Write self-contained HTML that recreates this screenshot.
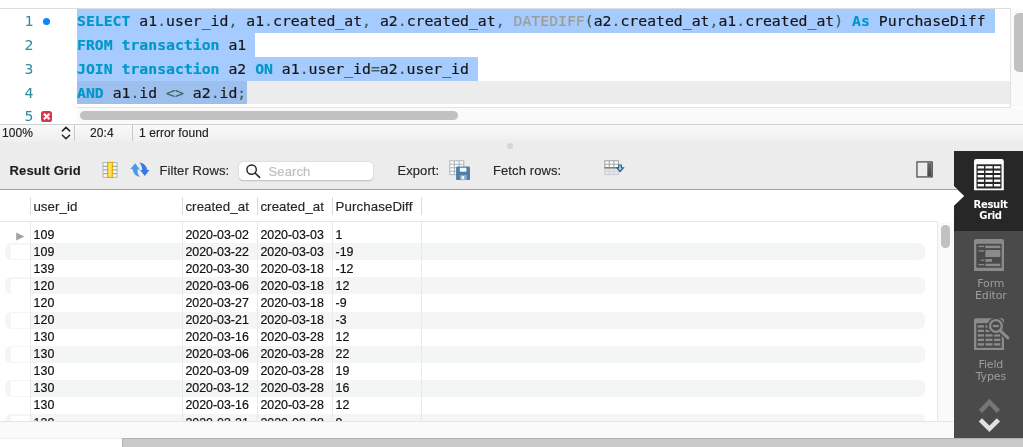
<!DOCTYPE html>
<html><head><meta charset="utf-8"><title>Result Grid</title>
<style>
*{box-sizing:border-box;margin:0;padding:0}
html,body{width:1023px;height:447px;overflow:hidden;background:#fff}
body{position:relative;font-family:"Liberation Sans",Arial,sans-serif;color:#1f1f1f}
.abs{position:absolute}
/* editor */
#ed-top{left:0;top:8px;width:1011px;height:1px;background:#dddddd}
#ed-right{left:1010px;top:8px;width:1px;height:100px;background:#e2e2e2}
#ed-vtrack{left:1011px;top:9px;width:12px;height:98px;background:#fafafa}
#ed-vthumb{left:1014px;top:12.5px;width:14px;height:59.5px;border-radius:5px;background:#c1c1c1}
#curline{left:77px;top:80.6px;width:933px;height:23.8px;background:#ececec}
.sel{position:absolute;left:77.3px;height:23.9px;background:#a6cbfe}
.ln{position:absolute;left:0;width:33.4px;text-align:right;font-family:"DejaVu Sans Mono","Liberation Mono",monospace;font-size:14px;line-height:23.8px;height:23.8px;color:#2d8ba3;transform:scaleX(1.054);transform-origin:right center}
.code{position:absolute;left:77.1px;white-space:pre;font-family:"DejaVu Sans Mono","Liberation Mono",monospace;font-size:14px;line-height:23.8px;height:23.8px;color:#161616;transform:scaleX(1.0566);transform-origin:left center;-webkit-text-stroke:0.18px}
.k{color:#0097c9;font-weight:bold}
.f{color:#9d9d95}
.o{color:#3d5f52}
#dot{left:42.9px;top:17.6px;width:7px;height:7px;border-radius:50%;background:#0a84ff}
#err{left:41px;top:110.8px;width:11.4px;height:11px;border-radius:2.6px;background:#d9364e}
#hline{left:77px;top:106.6px;width:934px;height:1px;background:#e4e4e4}
#htrack{left:77px;top:107.6px;width:946px;height:16px;background:#fafafa}
#hthumb{left:79.5px;top:111px;width:378px;height:9.4px;border-radius:5px;background:#c1c1c1}
/* status bar */
#status{left:0;top:123.6px;width:1023px;height:19px;background:linear-gradient(#f9f9f9,#eeeeee);border-top:1px solid #d2d2d2}
#status span{position:absolute;top:-0.8px;font-size:12px;line-height:19px;color:#222;letter-spacing:0.08px;-webkit-text-stroke:0.15px #222}
.vsep{position:absolute;top:124px;width:1px;height:17px;background:#c9c9c9}
/* lower pane */
#pane{left:0;top:142px;width:1023px;height:305px;background:#ececec}
#splitdot{left:506.5px;top:143px;width:6px;height:6px;border-radius:50%;background:#d6d6d6}
.tb{position:absolute;top:162px;height:18px;line-height:18px;font-size:13px;color:#262626;white-space:nowrap;letter-spacing:0.1px;-webkit-text-stroke:0.15px #262626}
#search{left:239px;top:162px;width:134px;height:18px;border-radius:4.5px;background:#fff;box-shadow:0 0 0 0.5px #dedede,0 0.6px 1.2px rgba(0,0,0,.28)}
#tbline{left:0;top:189px;width:954px;height:1px;background:#a2a2a2}
#grid{left:0;top:190px;width:954px;height:231px;background:#fff;overflow:hidden}
#below{left:0;top:421px;width:954px;height:17px;background:#fafafa;border-top:1px solid #e6e6e6}
#bot-l{left:0;top:437.6px;width:122px;height:10px;background:#fff;border-top:1px solid #efefef}
#bot-r{left:121.6px;top:437.8px;width:902px;height:10px;background:#c9c9c9;border-top:1px solid #b2b2b2;border-left:1px solid #b2b2b2}
.hd{position:absolute;top:8px;height:17px;line-height:17px;font-size:13.3px;color:#262626;white-space:nowrap;letter-spacing:0.08px;-webkit-text-stroke:0.15px #262626}
.hsep{position:absolute;top:7px;width:1px;height:17.5px;background:#dcdcdc}
#hdline{left:0;top:31px;width:938px;height:1px;background:#e6e6e6}
#gright{left:937px;top:31.6px;width:17px;height:200px;background:#fafafa;border-left:1px solid #e8e8e8}
.csep{position:absolute;top:32px;width:1px;height:200px;background:#e9e9e9}
.stripe{position:absolute;left:5px;width:920px;height:17.08px;border-radius:6px;background:#f4f5f5}
.rh{position:absolute;left:11.4px;width:18.8px;height:14.6px;margin-top:1.5px;background:#fff}
.row{-webkit-text-stroke:0.2px #111;position:absolute;left:0;width:938px;height:17px;line-height:17px;font-size:12.4px;color:#111;white-space:nowrap}
.row span{position:absolute;top:0}
.c1{left:33.6px}.c2{left:185.4px}.c3{left:260.4px}.c4{left:335.6px}
#gthumb{left:941px;top:34.9px;width:8.8px;height:23.4px;border-radius:4.2px;background:#c1c1c1}
/* sidebar */
#side{left:953.7px;top:151.2px;width:70px;height:286.4px;background:#4a4a4a}
#side-act{left:953.7px;top:151.2px;width:70px;height:79.4px;background:#272727}
.sl{position:absolute;left:955.9px;width:70px;text-align:center;font-family:"DejaVu Sans","Liberation Sans",sans-serif;font-size:11px;line-height:12.1px;color:#9d9d9d;letter-spacing:-0.15px}
.sl.act{font-family:"DejaVu Sans Condensed","DejaVu Sans","Liberation Sans",sans-serif;font-stretch:condensed;font-weight:bold;color:#fff;font-size:11.2px;line-height:11.4px;letter-spacing:-0.35px;left:955.5px}
</style></head>
<body>
<div id="root" style="position:absolute;left:0;top:0;width:1023px;height:447px;will-change:transform">
<!-- editor -->
<div class="abs" id="curline"></div>
<div class="sel" style="top:8.9px;width:917.6px"></div>
<div class="sel" style="top:32.7px;width:178px"></div>
<div class="sel" style="top:56.6px;width:400.8px;height:24.3px"></div>
<div class="sel" style="top:80.6px;width:169.5px;height:23.8px;background:#9cbfee"></div>
<div class="abs" id="ed-top"></div>
<div class="abs" id="ed-right"></div>
<div class="abs" id="ed-vtrack"></div>
<div class="abs" id="ed-vthumb"></div>
<div class="ln" style="top:10.2px">1</div>
<div class="ln" style="top:34px">2</div>
<div class="ln" style="top:57.8px">3</div>
<div class="ln" style="top:81.6px">4</div>
<div class="ln" style="top:105.4px">5</div>
<div class="abs" id="dot"></div>
<div class="code" style="top:10.2px"><span class="k">SELECT</span> a1<span class="o">.</span>user_id<span class="o">,</span> a1<span class="o">.</span>created_at<span class="o">,</span> a2<span class="o">.</span>created_at<span class="o">,</span> <span class="f">DATEDIFF</span><span class="o">(</span>a2<span class="o">.</span>created_at<span class="o">,</span>a1<span class="o">.</span>created_at<span class="o">)</span> <span class="k">As</span> PurchaseDiff</div>
<div class="code" style="top:34px"><span class="k">FROM</span> <span class="k">transaction</span> a1</div>
<div class="code" style="top:57.8px"><span class="k">JOIN</span> <span class="k">transaction</span> a2 <span class="k">ON</span> a1<span class="o">.</span>user_id<span class="o">=</span>a2<span class="o">.</span>user_id</div>
<div class="code" style="top:81.6px"><span class="k">AND</span> a1<span class="o">.</span>id <span class="o">&lt;&gt;</span> a2<span class="o">.</span>id<span class="o">;</span></div>
<div class="abs" id="hline"></div>
<div class="abs" id="htrack"></div>
<div class="abs" id="hthumb"></div>
<div class="abs" id="err"><svg width="11.4" height="11" viewBox="0 0 11.4 11" style="display:block"><path d="M2.9 2.7 L8.5 8.3 M8.5 2.7 L2.9 8.3" stroke="#fff" stroke-width="2.1" stroke-linecap="butt" fill="none"/></svg></div>
<!-- status bar -->
<div class="abs" id="status">
  <span style="left:2px">100%</span>
  <span style="left:90px">20:4</span>
  <span style="left:139px">1 error found</span>
</div>
<svg class="abs" style="left:61px;top:125.5px" width="10" height="15" viewBox="0 0 10 15"><path d="M1.4 4.9 L5 1.4 L8.6 4.9 M1.4 9.3 L5 12.8 L8.6 9.3" stroke="#222" stroke-width="1.5" fill="none" stroke-linecap="round" stroke-linejoin="round"/></svg>
<div class="vsep" style="left:74px"></div>
<div class="vsep" style="left:132px"></div>
<!-- lower pane -->
<div class="abs" id="pane"></div>
<div class="abs" id="splitdot"></div>
<div class="tb" style="left:9.6px;font-weight:bold;color:#1e1e1e">Result Grid</div>
<div class="tb" style="left:159.4px">Filter Rows:</div>
<div class="abs" id="search"></div>
<svg class="abs" style="left:245px;top:163.2px" width="17" height="16" viewBox="0 0 17 16"><circle cx="6.6" cy="6.6" r="4.7" stroke="#262626" stroke-width="1.45" fill="none"/><path d="M10 10 L14.6 14.4" stroke="#262626" stroke-width="1.55" stroke-linecap="round"/></svg>
<div class="tb" style="left:268.6px;top:162.6px;color:#c0c0c0;-webkit-text-stroke:0.2px #c0c0c0">Search</div>
<div class="tb" style="left:397.4px">Export:</div>
<div class="tb" style="left:493px">Fetch rows:</div>

<!-- toolbar icons -->
<svg class="abs" style="left:101.6px;top:161.4px" width="17" height="18" viewBox="0 0 17 18">
  <defs><linearGradient id="gold" x1="0" x2="1" y1="0" y2="0"><stop offset="0" stop-color="#f3c317"/><stop offset=".45" stop-color="#ffe86a"/><stop offset="1" stop-color="#f5c51b"/></linearGradient></defs>
  <rect x="1" y="1.6" width="14" height="14.7" fill="#fafbfc" stroke="#a9adb1" stroke-width="0.9"/>
  <path d="M1 5.3H15M1 8.9H15M1 12.6H15" stroke="#a4a8ad" stroke-width="1.3"/>
  <rect x="5.4" y="1.3" width="5.3" height="15.2" fill="url(#gold)" stroke="#dba506" stroke-width="0.9"/>
</svg>
<svg class="abs" style="left:130px;top:162px" width="20" height="16" viewBox="0 0 20 16">
  <path d="M5.3 1.3 L0.3 6.9 L2.7 6.9 C2.9 10.8 5.6 14.2 9.9 14.9 C8 12.7 7.4 10.2 7.5 7.4 L9.9 7.4 Z" fill="#4a9beb"/>
  <path d="M9.3 0.4 C13.6 0.9 16.9 3.9 17.2 8 L19.5 8 L14.8 13.9 L10 8 L12.3 8 C12.2 5.4 11.4 2.8 9.3 0.4 Z" fill="#3a79e2"/>
</svg>
<svg class="abs" style="left:449px;top:159.6px" width="22" height="21" viewBox="0 0 22 21">
  <rect x="0.8" y="0.8" width="14" height="13.8" fill="#fdfdfd" stroke="#aeb4ba" stroke-width="1"/>
  <path d="M0.8 4.3H14.8M0.8 7.7H14.8M0.8 11.2H14.8M5.4 0.8V14.6M10.1 0.8V14.6" stroke="#aeb4ba" stroke-width="1.1"/>
  <rect x="7.1" y="6.4" width="13.9" height="13.7" rx="1.2" fill="#4d7eaa"/>
  <rect x="10.8" y="7.8" width="6.6" height="3.9" rx="0.6" fill="#f4f8fb"/>
  <rect x="10.9" y="14.9" width="7" height="5.2" fill="#86aacb"/>
  <rect x="12.6" y="16" width="2.6" height="3.2" fill="#f0f5fa"/>
</svg>
<svg class="abs" style="left:603.6px;top:159.6px" width="22" height="17" viewBox="0 0 22 17">
  <rect x="0.9" y="0.8" width="13.6" height="13.8" fill="#e6e7e8" stroke="#c9cdd2" stroke-width="1"/>
  <path d="M0.9 11.3H14.5M5.3 7.8V14.6M9.9 7.8V14.6" stroke="#cfd3d8" stroke-width="1"/>
  <rect x="0.9" y="0.8" width="13.6" height="7" fill="#fdfdfd" stroke="#a3a5a8" stroke-width="1"/>
  <path d="M0.9 4.2H14.5M5.3 0.8V7.8M9.9 0.8V7.8" stroke="#a3a5a8" stroke-width="1.1"/>
  <path d="M0.4 7.8H14.9" stroke="#777" stroke-width="1.3"/>
  <path d="M14.8 5 H17.4 V7.7 H19.4 L16.1 11.5 L12.8 7.7 H14.8 Z" fill="#aadef2" stroke="#2a5f90" stroke-width="1.15" stroke-linejoin="miter"/>
</svg>
<svg class="abs" style="left:916px;top:161.4px" width="18" height="18" viewBox="0 0 18 18">
  <defs><linearGradient id="dk" x1="0" x2="0" y1="0" y2="1"><stop offset="0" stop-color="#6a6a6a"/><stop offset="1" stop-color="#454545"/></linearGradient></defs>
  <rect x="0.95" y="0.9" width="15.25" height="15.05" fill="#ededed" stroke="#363636" stroke-width="1.1"/>
  <rect x="11.3" y="1.4" width="4.4" height="14.05" fill="url(#dk)"/>
</svg>
<div class="abs" id="tbline"></div>
<div class="abs" id="grid">
  <div class="hsep" style="left:30px"></div>
  <div class="hsep" style="left:182px"></div>
  <div class="hsep" style="left:257px"></div>
  <div class="hsep" style="left:332px"></div>
  <div class="hsep" style="left:421px"></div>
  <div class="hd" style="left:33.4px">user_id</div>
  <div class="hd" style="left:185.4px">created_at</div>
  <div class="hd" style="left:260.4px">created_at</div>
  <div class="hd" style="left:335.6px">PurchaseDiff</div>
  <div class="abs" id="hdline"></div>
  <div class="abs" id="gright"></div>
  <div class="stripe" style="top:53.25px"></div><div class="rh" style="top:53.25px"></div>
  <div class="stripe" style="top:87.41px"></div><div class="rh" style="top:87.41px"></div>
  <div class="stripe" style="top:121.57px"></div><div class="rh" style="top:121.57px"></div>
  <div class="stripe" style="top:155.73px"></div><div class="rh" style="top:155.73px"></div>
  <div class="stripe" style="top:189.89px"></div><div class="rh" style="top:189.89px"></div>
  <div class="stripe" style="top:224.05px"></div><div class="rh" style="top:224.05px"></div>
  <div class="csep" style="left:30px"></div>
  <div class="csep" style="left:182px"></div>
  <div class="csep" style="left:257px"></div>
  <div class="csep" style="left:332px"></div>
  <div class="csep" style="left:421px"></div>
  <svg class="abs" style="left:16.4px;top:41.6px" width="9" height="9" viewBox="0 0 9 9"><path d="M0.2 0.4 L8.4 4.4 L0.2 8.4 Z" fill="#a3a3a3"/></svg>
  <div class="row" style="top:36.75px"><span class="c1">109</span><span class="c2">2020-03-02</span><span class="c3">2020-03-03</span><span class="c4">1</span></div>
  <div class="row" style="top:53.82px"><span class="c1">109</span><span class="c2">2020-03-22</span><span class="c3">2020-03-03</span><span class="c4">-19</span></div>
  <div class="row" style="top:70.89px"><span class="c1">139</span><span class="c2">2020-03-30</span><span class="c3">2020-03-18</span><span class="c4">-12</span></div>
  <div class="row" style="top:87.96px"><span class="c1">120</span><span class="c2">2020-03-06</span><span class="c3">2020-03-18</span><span class="c4">12</span></div>
  <div class="row" style="top:105.03px"><span class="c1">120</span><span class="c2">2020-03-27</span><span class="c3">2020-03-18</span><span class="c4">-9</span></div>
  <div class="row" style="top:122.10px"><span class="c1">120</span><span class="c2">2020-03-21</span><span class="c3">2020-03-18</span><span class="c4">-3</span></div>
  <div class="row" style="top:139.17px"><span class="c1">130</span><span class="c2">2020-03-16</span><span class="c3">2020-03-28</span><span class="c4">12</span></div>
  <div class="row" style="top:156.24px"><span class="c1">130</span><span class="c2">2020-03-06</span><span class="c3">2020-03-28</span><span class="c4">22</span></div>
  <div class="row" style="top:173.31px"><span class="c1">130</span><span class="c2">2020-03-09</span><span class="c3">2020-03-28</span><span class="c4">19</span></div>
  <div class="row" style="top:190.38px"><span class="c1">130</span><span class="c2">2020-03-12</span><span class="c3">2020-03-28</span><span class="c4">16</span></div>
  <div class="row" style="top:207.45px"><span class="c1">130</span><span class="c2">2020-03-16</span><span class="c3">2020-03-28</span><span class="c4">12</span></div>
  <div class="row" style="top:224.52px"><span class="c1">130</span><span class="c2">2020-03-21</span><span class="c3">2020-03-28</span><span class="c4">9</span></div>
  <div class="abs" id="gthumb"></div>
</div>
<div class="abs" id="below"></div>
<div class="abs" id="bot-l"></div>
<div class="abs" id="bot-r"></div>
<!-- sidebar -->
<div class="abs" id="side"></div>
<div class="abs" id="side-act"></div>

<!-- sidebar icons -->
<svg class="abs" style="left:953.6px;top:185.2px" width="11" height="22" viewBox="0 0 11 22">
  <path d="M0 1.2 L10.2 11 L0 20.8 Z" fill="#fff"/>
  <path d="M0 1.2 L2.9 4 L0 4 Z" fill="#ececec"/>
  <path d="M0 4.5 H3.4" stroke="#a2a2a2" stroke-width="1"/>
</svg>
<svg class="abs" style="left:974px;top:159px" width="30" height="32" viewBox="0 0 30 32">
  <path d="M0 2.2 Q0 0 2.2 0 H27.6 Q29.8 0 29.8 2.2 V31.3 H0 Z" fill="#fbfbfb"/>
  <rect x="2.5" y="5.3" width="25" height="24.2" fill="#272727"/>
  <g fill="#fbfbfb">
    <rect x="3.7" y="7.1" width="6.3" height="2.4"/><rect x="11.4" y="7.1" width="7.2" height="2.4"/><rect x="20" y="7.1" width="6.3" height="2.4"/>
    <rect x="3.7" y="11.6" width="6.3" height="2.4"/><rect x="11.4" y="11.6" width="7.2" height="2.4"/><rect x="20" y="11.6" width="6.3" height="2.4"/>
    <rect x="3.7" y="16" width="6.3" height="2.4"/><rect x="11.4" y="16" width="7.2" height="2.4"/><rect x="20" y="16" width="6.3" height="2.4"/>
    <rect x="3.7" y="20.5" width="6.3" height="2.4"/><rect x="11.4" y="20.5" width="7.2" height="2.4"/><rect x="20" y="20.5" width="6.3" height="2.4"/>
    <rect x="3.7" y="25" width="6.3" height="2.4"/><rect x="11.4" y="25" width="7.2" height="2.4"/><rect x="20" y="25" width="6.3" height="2.4"/>
  </g>
</svg>
<svg class="abs" style="left:974px;top:239px" width="30" height="32" viewBox="0 0 30 32">
  <path d="M0 2.2 Q0 0 2.2 0 H27.8 Q30 0 30 2.2 V31.9 H0 Z" fill="#8b8b8b"/>
  <rect x="2.3" y="4.8" width="25.4" height="23.9" fill="#4a4a4a"/>
  <g fill="#8b8b8b">
    <rect x="4.4" y="6.8" width="5.8" height="1.3"/><rect x="11.4" y="6.6" width="14.9" height="2.5"/>
    <rect x="4.4" y="11.3" width="5.8" height="1.3"/><rect x="11.4" y="11" width="14.9" height="7"/>
    <rect x="6.7" y="20.6" width="3.5" height="1.3"/><rect x="11.4" y="20.1" width="6.6" height="2.7"/>
    <rect x="4.4" y="25" width="5.8" height="1.3"/><rect x="11.4" y="24.7" width="14.9" height="2.4"/>
  </g>
</svg>
<svg class="abs" style="left:974px;top:314px" width="38" height="37" viewBox="0 0 38 37">
  <path d="M0 6.4 Q0 4.2 2.2 4.2 H27.8 Q30 4.2 30 6.4 V36 H0 Z" fill="#8b8b8b"/>
  <rect x="2.3" y="9.2" width="25.4" height="24.6" fill="#4a4a4a"/>
  <g fill="#8b8b8b">
    <rect x="3.7" y="11.2" width="6.3" height="2.4"/><rect x="11.4" y="11.2" width="7.2" height="2.4"/><rect x="20" y="11.2" width="6.3" height="2.4"/>
    <rect x="3.7" y="15.7" width="6.3" height="2.4"/><rect x="11.4" y="15.7" width="7.2" height="2.4"/><rect x="20" y="15.7" width="6.3" height="2.4"/>
    <rect x="3.7" y="20.2" width="6.3" height="2.4"/><rect x="11.4" y="20.2" width="7.2" height="2.4"/><rect x="20" y="20.2" width="6.3" height="2.4"/>
    <rect x="3.7" y="24.7" width="6.3" height="2.4"/><rect x="11.4" y="24.7" width="7.2" height="2.4"/><rect x="20" y="24.7" width="6.3" height="2.4"/>
    <rect x="3.7" y="29.2" width="6.3" height="2.4"/><rect x="11.4" y="29.2" width="7.2" height="2.4"/><rect x="20" y="29.2" width="6.3" height="2.4"/>
  </g>
  <circle cx="21.9" cy="12" r="8.6" fill="#4a4a4a"/>
  <path d="M26 16.6 L34.6 24.6" stroke="#4a4a4a" stroke-width="5.6" stroke-linecap="round"/>
  <circle cx="21.9" cy="12" r="5.9" fill="#4a4a4a" stroke="#8b8b8b" stroke-width="2.3"/>
  <path d="M26.4 16.8 L33.9 23.9" stroke="#8b8b8b" stroke-width="3" stroke-linecap="round"/>
  <rect x="18.9" y="10.9" width="6" height="2.2" fill="#8b8b8b"/>
</svg>
<svg class="abs" style="left:977px;top:397px" width="25" height="36" viewBox="0 0 25 36">
  <path d="M3.4 14.4 L12.4 5 L21.4 14.4" stroke="#767676" stroke-width="4.6" fill="none" stroke-linejoin="miter"/>
  <path d="M3.4 22.8 L12.4 31.8 L21.4 22.8" stroke="#e2e2e2" stroke-width="4.6" fill="none" stroke-linejoin="miter"/>
</svg>
<div class="sl act" style="top:198.6px">Result<br>Grid</div>
<div class="sl" style="top:278px">Form<br>Editor</div>
<div class="sl" style="top:358.6px">Field<br>Types</div>
</div>
</body></html>
